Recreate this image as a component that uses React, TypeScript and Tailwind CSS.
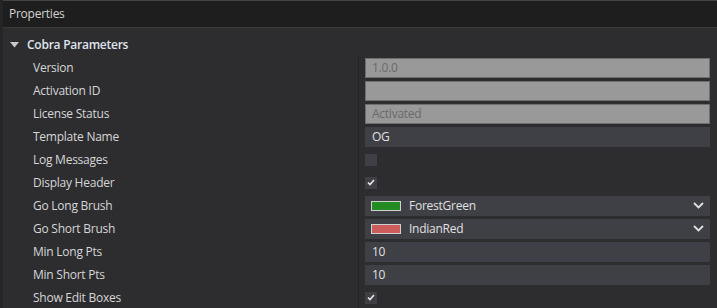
import React from 'react';

type Row =
  | { label: string; kind: 'readonly'; value: string }
  | { label: string; kind: 'text'; value: string }
  | { label: string; kind: 'check'; checked: boolean }
  | { label: string; kind: 'brush'; value: string; swatch: string };

const rows: Row[] = [
  { label: 'Version', kind: 'readonly', value: '1.0.0' },
  { label: 'Activation ID', kind: 'readonly', value: '' },
  { label: 'License Status', kind: 'readonly', value: 'Activated' },
  { label: 'Template Name', kind: 'text', value: 'OG' },
  { label: 'Log Messages', kind: 'check', checked: false },
  { label: 'Display Header', kind: 'check', checked: true },
  { label: 'Go Long Brush', kind: 'brush', value: 'ForestGreen', swatch: 'bg-[#228b22]' },
  { label: 'Go Short Brush', kind: 'brush', value: 'IndianRed', swatch: 'bg-[#cd5c5c]' },
  { label: 'Min Long Pts', kind: 'text', value: '10' },
  { label: 'Min Short Pts', kind: 'text', value: '10' },
  { label: 'Show Edit Boxes', kind: 'check', checked: true },
];

const Check: React.FC<{ checked: boolean }> = ({ checked }) => (
  <div className="w-[12px] h-[12px] bg-[#3f3f46] flex items-center justify-center">
    {checked && (
      <svg width="8" height="7" viewBox="0 0 8 7">
        <path d="M1 3.5 L3 5.5 L7 1" fill="none" stroke="#e8e8e8" strokeWidth="1.6" />
      </svg>
    )}
  </div>
);

const Value: React.FC<{ row: Row }> = ({ row }) => {
  if (row.kind === 'readonly') {
    return (
      <div className="h-[20px] w-full bg-[#999999] border border-[#6e6e6e] px-[6px] flex items-center text-[#6a6a6a]">
        {row.value}
      </div>
    );
  }
  if (row.kind === 'text') {
    return (
      <div className="h-[20px] w-full bg-[#3f3f46] px-[7px] flex items-center text-[#e0e0e0]">
        {row.value}
      </div>
    );
  }
  if (row.kind === 'check') {
    return <Check checked={row.checked} />;
  }
  return (
    <div className="h-[20px] w-full bg-[#3f3f46] pl-[6px] pr-[6px] flex items-center text-[#e0e0e0]">
      <div className={`w-[30px] h-[10px] border border-[#d0d0d0] ${row.swatch}`} />
      <span className="ml-[8px] flex-1">{row.value}</span>
      <svg width="11" height="7" viewBox="0 0 11 7">
        <path d="M1 1 L5.5 5.5 L10 1" fill="none" stroke="#e0e0e0" strokeWidth="1.8" />
      </svg>
    </div>
  );
};

export default function App() {
  return (
    <div
      className="w-[717px] h-[308px] overflow-hidden bg-[#2d2d30] border-l-[3px] border-[#252526] flex flex-col text-[12px] leading-none tracking-[-0.25px]"
      style={{ fontFamily: '"Open Sans", "Noto Sans", sans-serif' }}
    >
      <div className="h-[28px] shrink-0 bg-[#1e1e1e] border-t border-[#434343] border-b border-b-[#3a3a3a] flex items-center pl-[6px] text-[#d2d2d2]">
        Properties
      </div>
      <div className="h-[5px] shrink-0" />
      <div className="h-[23px] shrink-0 flex items-center">
        <svg className="ml-[7px]" width="9" height="6" viewBox="0 0 9 6">
          <path d="M0 0 L9 0 L4.5 5.5 Z" fill="#c8c8c8" />
        </svg>
        <span className="ml-[8px] font-semibold text-[#dfe4ec]">Cobra Parameters</span>
      </div>
      {rows.map(row => (
        <div key={row.label} className="h-[23px] shrink-0 flex">
          <div className="w-[356px] border-r border-[#252526] flex items-center pl-[30px] text-[#d6d6d6]">
            {row.label}
          </div>
          <div className="flex-1 pl-[6px] pr-[7px] flex items-center">
            <Value row={row} />
          </div>
        </div>
      ))}
    </div>
  );
}
